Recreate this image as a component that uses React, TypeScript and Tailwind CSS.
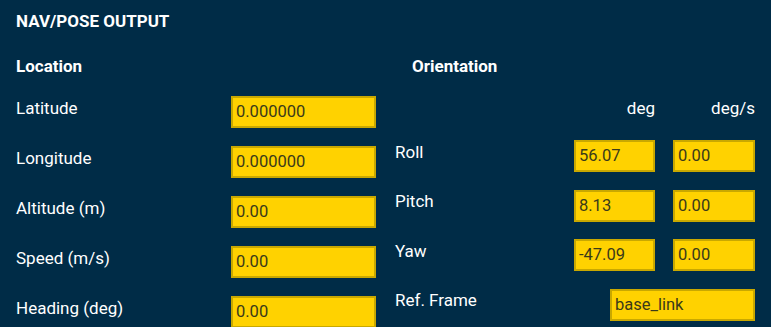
import React from 'react'

const font = { fontFamily: 'Roboto, "Liberation Sans", sans-serif' }

const Field = ({ value, width = 'w-[145px]' }: { value: string; width?: string }) => (
    <div className={`${width} h-[32px] shrink-0 border-2 border-[#c9a800] bg-[#ffd200] px-[3px] flex items-center text-[16.5px] leading-[18px] text-[#3a3a1a]`}>
        {value}
    </div>
)

const locationRows = [
    { label: 'Latitude', value: '0.000000' },
    { label: 'Longitude', value: '0.000000' },
    { label: 'Altitude (m)', value: '0.00' },
    { label: 'Speed (m/s)', value: '0.00' },
    { label: 'Heading (deg)', value: '0.00' },
]

const orientationRows = [
    { label: 'Roll', deg: '56.07', rate: '0.00' },
    { label: 'Pitch', deg: '8.13', rate: '0.00' },
    { label: 'Yaw', deg: '-47.09', rate: '0.00' },
]

const App = () => {
    return (
        <div className="min-h-screen bg-[#002c47] text-white px-4 pt-3" style={font}>
            <h2 className="text-[17px] leading-[18px] font-bold">NAV/POSE OUTPUT</h2>

            <div className="grid grid-cols-2 gap-x-[19px] mt-[27px]">
                {/* location */}
                <div>
                    <h3 className="text-[17px] leading-[18px] font-bold">Location</h3>
                    <div className="mt-[21px] flex flex-col">
                        {locationRows.map((row) => (
                            <div key={row.label} className="h-[50px] flex items-start justify-between">
                                <span className="pt-[1.5px] text-[17px] leading-[20px]">{row.label}</span>
                                <Field value={row.value} />
                            </div>
                        ))}
                    </div>
                </div>

                {/* orientation */}
                <div>
                    <h3 className="pl-[17px] text-[17px] leading-[18px] font-bold">Orientation</h3>
                    <div className="mt-[24px] h-[20px] flex justify-end gap-[18px] text-[17px] leading-[18px]">
                        <span className="w-[81px] text-right">deg</span>
                        <span className="w-[82px] text-right">deg/s</span>
                    </div>
                    <div className="mt-[21px] flex flex-col">
                        {orientationRows.map((row) => (
                            <div key={row.label} className="h-[49.5px] flex items-start">
                                <span className="flex-1 pt-[1.5px] text-[17px] leading-[20px]">{row.label}</span>
                                <div className="flex gap-[18px]">
                                    <Field value={row.deg} width="w-[81px]" />
                                    <Field value={row.rate} width="w-[82px]" />
                                </div>
                            </div>
                        ))}
                        <div className="h-[50px] flex items-start justify-between">
                            <span className="pt-[1.5px] text-[17px] leading-[20px]">Ref. Frame</span>
                            <Field value="base_link" />
                        </div>
                    </div>
                </div>
            </div>
        </div>
    )
}

export default App
